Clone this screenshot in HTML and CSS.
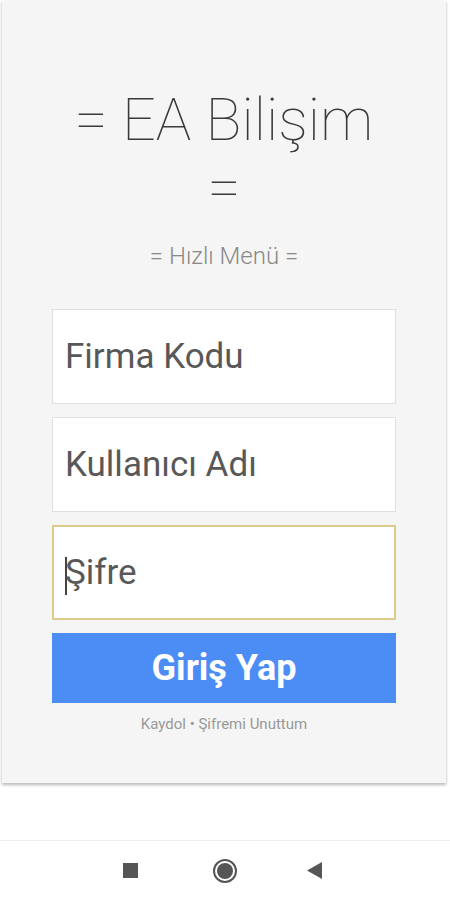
FILE: index.html
```html
<!DOCTYPE html>
<html lang="tr">
<head>
<meta charset="utf-8">
<link rel="stylesheet" href="styles.css">
</head>
<body>
<div class="screen">
  <main class="card">
    <h1 class="title">= EA Bilişim<br>=</h1>
    <p class="subtitle">= Hızlı Menü =</p>
    <form class="form">
      <div class="field"><span class="placeholder">Firma Kodu</span></div>
      <div class="field"><span class="placeholder">Kullanıcı Adı</span></div>
      <div class="field focused"><span class="caret"></span><span class="placeholder">Şifre</span></div>
      <div class="button">Giriş Yap</div>
    </form>
    <p class="links">Kaydol • Şifremi Unuttum</p>
  </main>
  <div class="spacer"></div>
  <nav class="navbar">
    <span class="nav-square"></span>
    <span class="nav-home"><span class="nav-home-inner"></span></span>
    <svg class="nav-back" width="15" height="17" viewBox="0 0 15 17"><path d="M15 0 L15 17 L0 8.5 Z" fill="#555"/></svg>
  </nav>
</div>
</body>
</html>
```

FILE: styles.css
```css
* { box-sizing: border-box; }
html, body { margin: 0; padding: 0; background: #fff; }
body { font-family: Roboto, "Noto Sans", sans-serif; width: 450px; height: 900px; overflow: hidden; }
.screen { display: flex; flex-direction: column; height: 900px; }
.card {
  margin: 0 4px 0 2px;
  height: 783px;
  background: #f5f5f5;
  box-shadow: 0 2px 3px rgba(0,0,0,0.28);
  display: flex;
  flex-direction: column;
  align-items: center;
  padding-top: 86px;
}
.title {
  margin: 0;
  font-weight: 100;
  font-size: 59.5px;
  line-height: 68px;
  color: #3a3a3a;
  text-align: center;
}
.subtitle {
  margin: 20px 0 0;
  font-size: 24px;
  font-weight: 300;
  color: #888;
  line-height: 28px;
}
.form {
  margin-top: 39px;
  width: 344px;
  display: flex;
  flex-direction: column;
  gap: 13px;
}
.field {
  height: 95px;
  background: #fff;
  border: 1px solid #e0e0e0;
  display: flex;
  align-items: center;
  padding-left: 12px;
  position: relative;
}
.field.focused { border: 2px solid #dccb8c; padding-left: 11px; }
.placeholder { font-size: 35px; color: #585858; }
.caret {
  position: absolute;
  left: 11px;
  top: 30px;
  width: 1.5px;
  height: 38px;
  background: #444;
}
.button {
  height: 70px;
  background: #4b8cf5;
  color: #fff;
  font-weight: 700;
  font-size: 36px;
  display: flex;
  align-items: center;
  justify-content: center;
}
.links {
  margin: 12px 0 0;
  font-size: 15px;
  color: #999;
}
.spacer { height: 58px; border-bottom: 1px solid #eee; }
.navbar {
  flex: 1;
  display: flex;
  align-items: center;
  justify-content: center;
  padding-right: 5px;
}
.nav-square { width: 15px; height: 15px; background: #555; margin-right: 75px; }
.nav-home {
  width: 24px; height: 24px; border-radius: 50%;
  border: 2px solid #555;
  display: flex; align-items: center; justify-content: center;
  margin-right: 70px;
}
.nav-home-inner { width: 16px; height: 16px; border-radius: 50%; background: #555; }
```
